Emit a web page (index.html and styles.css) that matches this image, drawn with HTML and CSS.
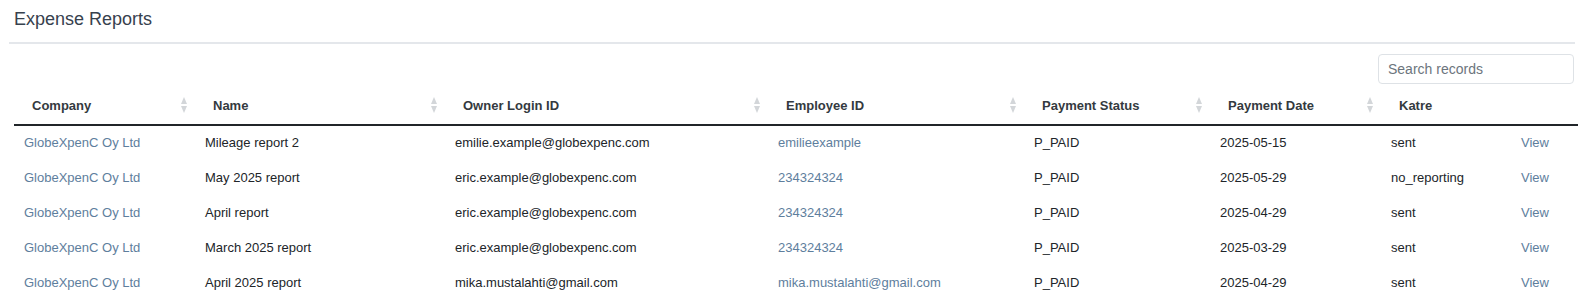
FILE: index.html
```html
<!DOCTYPE html>
<html>
<head>
<meta charset="utf-8">
<title>Expense Reports</title>
<link rel="stylesheet" href="styles.css">
</head>
<body>
<div class="wrap">
  <div class="page-head"><h1 class="title">Expense Reports</h1></div>
  <div class="toolbar"><input class="search" type="text" placeholder="Search records"></div>
  <div class="table-box">
    <table class="grid">
      <colgroup>
        <col class="c1"><col class="c2"><col class="c3"><col class="c4"><col class="c5"><col class="c6"><col class="c7"><col class="c8">
      </colgroup>
      <thead>
        <tr>
          <th><div class="th-in"><span>Company</span><svg class="sort" width="6" height="17" viewBox="0 0 6 17"><polygon points="3,0 6,7 0,7"/><polygon points="0,9 6,9 3,16"/></svg></div></th>
          <th><div class="th-in"><span>Name</span><svg class="sort" width="6" height="17" viewBox="0 0 6 17"><polygon points="3,0 6,7 0,7"/><polygon points="0,9 6,9 3,16"/></svg></div></th>
          <th><div class="th-in"><span>Owner Login ID</span><svg class="sort" width="6" height="17" viewBox="0 0 6 17"><polygon points="3,0 6,7 0,7"/><polygon points="0,9 6,9 3,16"/></svg></div></th>
          <th><div class="th-in"><span>Employee ID</span><svg class="sort" width="6" height="17" viewBox="0 0 6 17"><polygon points="3,0 6,7 0,7"/><polygon points="0,9 6,9 3,16"/></svg></div></th>
          <th><div class="th-in"><span>Payment Status</span><svg class="sort" width="6" height="17" viewBox="0 0 6 17"><polygon points="3,0 6,7 0,7"/><polygon points="0,9 6,9 3,16"/></svg></div></th>
          <th><div class="th-in"><span>Payment Date</span><svg class="sort" width="6" height="17" viewBox="0 0 6 17"><polygon points="3,0 6,7 0,7"/><polygon points="0,9 6,9 3,16"/></svg></div></th>
          <th><div class="th-in"><span>Katre</span></div></th>
          <th></th>
        </tr>
      </thead>
      <tbody>
        <tr>
          <td><a class="lnk" href="#">GlobeXpenC Oy Ltd</a></td>
          <td>Mileage report 2</td>
          <td>emilie.example@globexpenc.com</td>
          <td><a class="lnk" href="#">emilieexample</a></td>
          <td>P_PAID</td>
          <td>2025-05-15</td>
          <td>sent</td>
          <td><a class="lnk" href="#">View</a></td>
        </tr>
        <tr>
          <td><a class="lnk" href="#">GlobeXpenC Oy Ltd</a></td>
          <td>May 2025 report</td>
          <td>eric.example@globexpenc.com</td>
          <td><a class="lnk" href="#">234324324</a></td>
          <td>P_PAID</td>
          <td>2025-05-29</td>
          <td>no_reporting</td>
          <td><a class="lnk" href="#">View</a></td>
        </tr>
        <tr>
          <td><a class="lnk" href="#">GlobeXpenC Oy Ltd</a></td>
          <td>April report</td>
          <td>eric.example@globexpenc.com</td>
          <td><a class="lnk" href="#">234324324</a></td>
          <td>P_PAID</td>
          <td>2025-04-29</td>
          <td>sent</td>
          <td><a class="lnk" href="#">View</a></td>
        </tr>
        <tr>
          <td><a class="lnk" href="#">GlobeXpenC Oy Ltd</a></td>
          <td>March 2025 report</td>
          <td>eric.example@globexpenc.com</td>
          <td><a class="lnk" href="#">234324324</a></td>
          <td>P_PAID</td>
          <td>2025-03-29</td>
          <td>sent</td>
          <td><a class="lnk" href="#">View</a></td>
        </tr>
        <tr>
          <td><a class="lnk" href="#">GlobeXpenC Oy Ltd</a></td>
          <td>April 2025 report</td>
          <td>mika.mustalahti@gmail.com</td>
          <td><a class="lnk" href="#">mika.mustalahti@gmail.com</a></td>
          <td>P_PAID</td>
          <td>2025-04-29</td>
          <td>sent</td>
          <td><a class="lnk" href="#">View</a></td>
        </tr>
      </tbody>
    </table>
  </div>
</div>
</body>
</html>
```

FILE: styles.css
```css
* { box-sizing: border-box; }
html, body { margin: 0; padding: 0; background: #fff; }
body {
  font-family: "Liberation Sans", Arial, sans-serif;
  color: #212529;
  font-size: 13px;
}
.wrap { padding: 0 9px; }
.page-head {
  padding: 8px 0 12px 5px;
  border-bottom: 2px solid #e4e7eb;
}
.title {
  margin: 0;
  font-size: 18px;
  line-height: 22px;
  font-weight: normal;
  color: #37414e;
}
.toolbar {
  display: flex;
  justify-content: flex-end;
  padding: 10px 1px 0 0;
}
.search {
  width: 196px;
  height: 30px;
  border: 1px solid #dee2e6;
  border-radius: 4px;
  padding: 0 9px;
  font-family: "Liberation Sans", Arial, sans-serif;
  font-size: 14px;
  color: #495057;
  outline: none;
}
.search::placeholder { color: #6c757d; }
.table-box { padding-left: 5px; }
.grid {
  width: 1564px;
  table-layout: fixed;
  border-collapse: collapse;
}
.c1 { width: 181px; }
.c2 { width: 250px; }
.c3 { width: 323px; }
.c4 { width: 256px; }
.c5 { width: 186px; }
.c6 { width: 171px; }
.c7 { width: 130px; }
.c8 { width: 67px; }
.grid th {
  text-align: left;
  font-weight: bold;
  color: #343a40;
  line-height: 15px;
  padding: 13.5px 8px 11.5px 18px;
  border-bottom: 2px solid #212529;
  white-space: nowrap;
}
.th-in {
  display: flex;
  align-items: center;
  justify-content: space-between;
  height: 15px;
}
.sort { fill: #d3d6d9; flex: none; }
.grid td {
  padding: 9px 10px 11px 10px;
  line-height: 15px;
  white-space: nowrap;
  overflow: hidden;
}
.lnk { color: #5e7e9d; text-decoration: none; }
```
